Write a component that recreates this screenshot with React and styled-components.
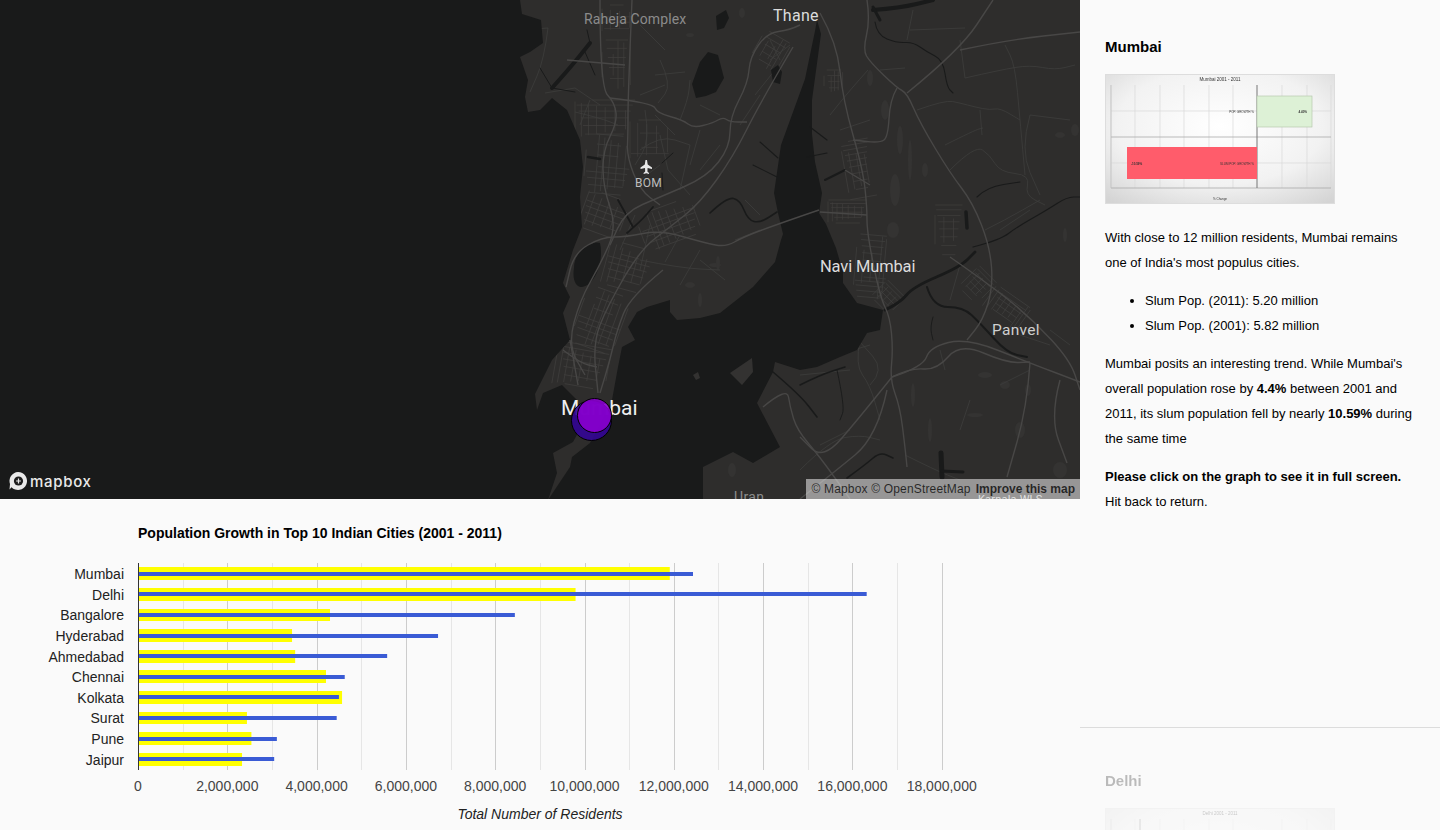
import React from 'react';
import styled, { createGlobalStyle } from 'styled-components';

const GlobalStyle = createGlobalStyle`
  html, body {
    margin: 0;
    height: 100%;
    overflow: hidden;
    background: #fafafa;
    font-family: 'Liberation Sans', Arial, sans-serif;
  }
  #root { height: 830px; }
`;

const WATER =
  'M-60,-60 L520,-60 520,0 522,14 541,20 543,43 530,52 520,57 528,80 525,97 528,112 540,110 552,98 567,110 580,140 583,167 580,197 582,227 573,250 563,283 570,297 563,313 570,340 552,360 535,394 537,410 543,393 562,385 577,400 585,420 573,442 553,453 557,473 548,500 570,467 572,457 590,443 612,400 618,367 622,347 635,340 628,327 637,312 647,307 670,300 670,312 677,320 700,318 720,313 753,287 775,262 781,240 783,234 778,213 774,193 781,145 805,79 815,31 817,20 821,34 812,100 812,134 815,162 822,193 819,213 826,224 836,248 843,272 843,283 857,303 883,310 880,330 867,333 857,350 840,357 817,367 800,370 775,362 773,372 757,403 780,447 753,463 733,452 703,467 703,560 -60,560 Z';

const LAKES = [
  'M692,84 L700,62 708,52 718,55 724,78 716,92 706,96 696,98 Z',
  'M716,16 L726,10 729,18 724,28 717,30 Z',
  'M574,268 C574,250 592,240 600,243 C604,260 596,285 582,287 C576,287 572,280 574,268 Z',
  'M771,70 L778,65 782,72 780,84 773,82 Z',
];

const LAND_PATCHES = [
  'M730,373 L752,358 753,372 742,385 Z',
  'M693,375 L698,372 700,378 696,380 Z',
];

const CREEKS = [
  { w: 4, d: 'M552,88 L570,68 590,43' },
  { w: 1, d: 'M590,43 L587,30 M585,52 L595,75 M552,88 L540,68 M552,88 L575,92' },
  { w: 1.8, d: 'M618,200 L633,227 M627,233 L640,222 653,207' },
  { w: 2.5, d: 'M588,157 L600,159' },
  { w: 1, d: 'M662,163 L673,153 M662,173 L663,190' },
  { w: 1.6, d: 'M710,213 L727,197 740,200 748,220 760,223 777,212' },
  { w: 1.1, d: 'M760,142 L778,158 M753,165 L777,177' },
  { w: 1.2, d: 'M810,127 L827,140 M807,157 L827,153' },
  { w: 2, d: 'M825,180 L845,170' },
  { w: 4, d: 'M873,10 L900,8 933,0' },
  { w: 3, d: 'M873,7 L880,20' },
  { w: 1.1, d: 'M875,22 L877,35 897,43 913,42 927,52 943,60 947,87 953,93' },
  { w: 2.8, d: 'M885,310 L900,303 913,287 960,267 975,252' },
  { w: 2, d: 'M927,287 L933,307 963,307 980,323 1007,353 1027,357' },
  { w: 0.9, d: 'M933,317 L930,327 933,340' },
  { w: 1.6, d: 'M773,372 L800,395 817,417 M800,385 L820,375 845,367' },
  { w: 0.9, d: 'M837,370 L845,407 840,420' },
  { w: 1.6, d: 'M847,478 L865,465 880,452 893,458' },
  { w: 1.1, d: 'M977,197 L987,187 1020,182' },
  { w: 3.5, d: 'M966,212 L967,228' },
  { w: 1.2, d: 'M973,247 L1000,240 1017,227 1047,210 1067,197 1080,197' },
  { w: 5, d: 'M941,453 L942,477' },
  { w: 3, d: 'M942,471 L963,472' },
];

const MINOR_ROADS = [
  'M520,30 L548,28 M548,28 L544,60 530,92 M545,93 L575,88 M575,88 L600,105 M575,112 L600,118 618,125',
  'M640,25 L665,50 M660,60 L672,85 658,103 M655,75 L685,72 M680,120 L688,100 690,80 M700,105 L720,115',
  'M640,150 L660,135 690,145 M660,135 L668,170 M690,145 L680,190 M720,145 L700,170 M640,180 L660,165',
  'M770,40 L780,60 M770,60 L790,45 M755,95 L775,70 M740,125 L760,95',
  'M760,230 L735,240 M745,200 L760,215 M640,260 L680,268 720,270 M700,260 L725,280',
  'M907,40 L913,10 M910,30 L965,28 M870,120 L840,130 M868,70 L850,90 830,115 M880,70 L905,68',
  'M917,110 L945,100 960,103 975,107 990,110 1000,108 1020,120 M980,110 L982,135 M945,145 L975,130 983,128',
  'M950,170 L975,145 990,155 1000,172 1030,175 1025,195 1045,205 M1025,175 L1020,120 1015,65 1005,45',
  'M960,40 L965,78 M965,78 L1000,70 1030,65 1055,70 1075,65 M1030,115 L1020,150 1040,195 M1030,115 L1070,120',
  'M1000,230 L1030,210 M985,230 L1005,220 1040,200 M950,300 L960,265',
  'M800,375 L850,370 M820,360 L870,345 M860,340 L855,365 870,385 880,420 M870,385 L885,370 860,342',
  'M800,470 L830,440 860,435 880,440 M850,430 L820,445 M940,350 L945,370 M1000,385 L1030,370',
  'M905,455 L935,470 960,480 M970,400 L960,430 M1050,330 L1070,345 M1020,335 L1050,345',
  'M645,110 L650,140 635,165 M655,115 L675,135 M640,95 L665,85 M590,100 L580,125 M700,130 L690,165 M668,170 L690,195',
  'M635,215 L620,250 M650,225 L640,270 M680,235 L665,262 M700,250 L680,285',
];

const MAJOR_ROADS = [
  'M600,0 L600,87 615,103 617,123 603,150 603,187 617,227 600,265 580,300 568,345 585,375',
  'M632,0 L628,97 628,133 627,157 640,190 660,205',
  'M610,98 L653,103 657,113 683,120 693,128 713,123 723,117 730,122 747,122',
  'M800,25 L790,30 767,33 750,57 748,83 730,117 730,147 707,177 660,197 625,212 610,245',
  'M793,47 L760,103 733,157 700,203 670,227 640,250 607,307 593,343 598,393',
  'M819,210 L781,223 743,237 726,247 705,243 660,230 626,237 602,237 574,253 566,287',
  'M663,270 L630,297 617,330 610,360 600,393',
  'M563,350 L580,363 597,367 M570,340 L578,385',
  'M820,13 L837,43 843,100 863,170 867,207 867,233 880,297 890,317 893,350 890,380 900,407 905,447 907,467',
  'M867,0 L870,20 863,50 870,62 897,88 907,93 920,123 950,173 973,203 990,247 993,287 983,320 967,340',
  'M907,93 L960,50 993,0 M960,50 L1007,40 1080,32',
  'M897,88 L890,100 888,137 880,143 853,140',
  'M892,377 L923,367 930,347 967,338 1030,363 1080,382',
  'M892,377 L910,368 937,370 960,343 1007,363 1030,362',
  'M950,257 L993,287 1033,320 1070,360 1080,390',
  'M1030,363 L1027,407 1007,477 M1060,380 L1050,417 1067,463',
  'M892,377 L860,417 823,460 800,437 M887,390 L877,437 833,473 800,499',
  'M763,407 L787,387 790,407 797,430 820,457 850,499',
  'M820,212 L867,215 M845,170 L870,185 M567,60 L625,65',
];

const CITY_GRIDS = [
  { x: 602, y: 5, w: 30, h: 30, s: 8, r: 0 },
  { x: 602, y: 40, w: 30, h: 50, s: 8, r: 0 },
  { x: 575, y: 100, w: 60, h: 40, s: 8, r: 0 },
  { x: 585, y: 135, w: 45, h: 60, s: 8, r: 5 },
  { x: 630, y: 120, w: 40, h: 40, s: 10, r: 0 },
  { x: 582, y: 195, w: 45, h: 40, s: 8, r: 20 },
  { x: 640, y: 205, w: 60, h: 40, s: 8, r: -20 },
  { x: 605, y: 245, w: 45, h: 45, s: 8, r: 15 },
  { x: 578, y: 290, w: 45, h: 60, s: 8, r: 20 },
  { x: 555, y: 345, w: 55, h: 45, s: 7, r: 10 },
  { x: 755, y: 35, w: 32, h: 35, s: 6, r: 30 },
  { x: 824, y: 70, w: 20, h: 22, s: 5, r: 0 },
  { x: 828, y: 200, w: 40, h: 24, s: 5, r: 0 },
  { x: 845, y: 140, w: 28, h: 60, s: 6, r: -10 },
  { x: 855, y: 235, w: 32, h: 65, s: 6, r: 5 },
  { x: 875, y: 285, w: 25, h: 25, s: 5, r: 45 },
  { x: 935, y: 205, w: 28, h: 50, s: 7, r: 0 },
  { x: 965, y: 270, w: 25, h: 30, s: 5, r: 45 },
  { x: 985, y: 295, w: 45, h: 28, s: 5, r: 35 },
];

const PARK_SPOTS = [
  [885, 110, 4, 10], [870, 78, 3, 8], [900, 140, 3, 14], [895, 190, 5, 16], [910, 160, 2, 20],
  [925, 170, 3, 7], [893, 230, 6, 8], [1060, 135, 5, 3], [1075, 130, 4, 6], [1065, 235, 2, 7],
  [985, 375, 7, 3], [975, 415, 8, 2], [1005, 385, 5, 4], [1020, 430, 5, 8], [1028, 390, 3, 6],
  [930, 430, 2, 12], [913, 395, 2, 12], [690, 285, 5, 3], [715, 265, 6, 2], [700, 300, 2, 7],
  [718, 263, 2, 7], [742, 13, 3, 5], [690, 35, 4, 2], [1060, 470, 7, 8], [732, 470, 4, 7],
];

const jitter = (n) => ((n * 9301 + 49297) % 233280) / 233280;

// irregular street blocks, so the grids don't read as a plain hatch
const gridPath = ({ x, y, w, h, s }) => {
  let d = '';
  let n = x + y;
  for (let i = 0; i <= w; i += s * (0.6 + jitter(n++) * 0.9)) {
    d += `M${(x + i).toFixed(1)},${(y + jitter(n++) * h * 0.3).toFixed(1)} V${(y + h - jitter(n++) * h * 0.3).toFixed(1)} `;
  }
  for (let j = 0; j <= h; j += s * (0.6 + jitter(n++) * 0.9)) {
    d += `M${(x + jitter(n++) * w * 0.3).toFixed(1)},${(y + j).toFixed(1)} H${(x + w - jitter(n++) * w * 0.3).toFixed(1)} `;
  }
  return d;
};

// rounds the corners of the hand-traced polylines
const smooth = (d) =>
  d
    .split('M')
    .filter((part) => part.trim())
    .map((part) => {
      const pts = part
        .replace(/[LZ]/g, ' ')
        .trim()
        .split(/\s+/)
        .map((p) => p.split(',').map(Number));
      if (pts.length < 3) return `M${pts.map((p) => p.join(',')).join(' L')}`;
      let out = `M${pts[0].join(',')}`;
      for (let i = 1; i < pts.length - 1; i++) {
        const mx = (pts[i][0] + pts[i + 1][0]) / 2;
        const my = (pts[i][1] + pts[i + 1][1]) / 2;
        out += ` Q${pts[i].join(',')} ${mx},${my}`;
      }
      return `${out} L${pts[pts.length - 1].join(',')}`;
    })
    .join(' ');

const CITIES = [
  { name: 'Mumbai', city: 11.91, slum: 12.43, top: 17, thick: 13, inner: 22, base: 29 },
  { name: 'Delhi', city: 9.8, slum: 16.32, top: 38, thick: 13, inner: 42, base: 50 },
  { name: 'Bangalore', city: 4.3, slum: 8.44, top: 59, thick: 12, inner: 63, base: 70 },
  { name: 'Hyderabad', city: 3.45, slum: 6.72, top: 79, thick: 13, inner: 84, base: 91 },
  { name: 'Ahmedabad', city: 3.52, slum: 5.58, top: 100, thick: 13, inner: 104, base: 112 },
  { name: 'Chennai', city: 4.21, slum: 4.63, top: 120, thick: 13, inner: 125, base: 132 },
  { name: 'Kolkata', city: 4.57, slum: 4.5, top: 141, thick: 13, inner: 145, base: 153 },
  { name: 'Surat', city: 2.44, slum: 4.45, top: 162, thick: 12, inner: 166, base: 173 },
  { name: 'Pune', city: 2.54, slum: 3.11, top: 182, thick: 13, inner: 187, base: 194 },
  { name: 'Jaipur', city: 2.33, slum: 3.05, top: 203, thick: 13, inner: 207, base: 215 },
];

const AXIS_X = 138;
const PER_MILLION = 44.65;
const PLOT_TOP = 13;
const PLOT_BOTTOM = 220;

const toX = (m) => AXIS_X + m * PER_MILLION;

const BarChart = () => {
  const ticks = Array.from({ length: 19 }, (_, i) => i);
  return (
    <ChartSvg width="1080" height="280">
      {ticks.slice(1).map((t) => (
        <GridLine
          key={t}
          $major={t % 2 === 0}
          x1={Math.round(toX(t)) + 0.5}
          x2={Math.round(toX(t)) + 0.5}
          y1={PLOT_TOP}
          y2={PLOT_BOTTOM}
        />
      ))}
      {CITIES.map((c) => (
        <g key={c.name}>
          <rect x={AXIS_X} y={c.top} width={c.city * PER_MILLION} height={c.thick} fill="#ffff00" />
          <rect x={AXIS_X} y={c.inner} width={c.slum * PER_MILLION} height={4} fill="#3a5bd5" />
          <CategoryLabel x={124} y={c.base}>
            {c.name}
          </CategoryLabel>
        </g>
      ))}
      <AxisLine x1={AXIS_X + 0.5} x2={AXIS_X + 0.5} y1={PLOT_TOP} y2={PLOT_BOTTOM} />
      {ticks
        .filter((t) => t % 2 === 0)
        .map((t) => (
          <TickLabel key={t} x={toX(t)} y={241}>
            {(t * 1000000).toLocaleString('en-US')}
          </TickLabel>
        ))}
      <AxisTitle x={540} y={269}>
        Total Number of Residents
      </AxisTitle>
    </ChartSvg>
  );
};

const Thumb = ({ id, title, zero, dimmed }) => (
  <ThumbBox>
    <svg width="230" height="130">
      <defs>
        <radialGradient id={`sheen-${id}`} cx="50%" cy="40%" r="75%">
          <stop offset="0%" stopColor="#ffffff" />
          <stop offset="60%" stopColor="#f2f2f2" />
          <stop offset="100%" stopColor="#d4d4d4" />
        </radialGradient>
      </defs>
      <rect width="230" height="130" fill={`url(#sheen-${id})`} />
      <ThumbTitle x="115" y="7">
        {title}
      </ThumbTitle>
      {[6, 30, 55, 79, 104, 128, 177, 202, 226].map((x) => (
        <line key={x} x1={x} x2={x} y1="11" y2="114" stroke="#d8d8d8" strokeWidth="0.7" />
      ))}
      {[37, 89].map((y) => (
        <line key={y} x1="6" x2="226" y1={y} y2={y} stroke="#d8d8d8" strokeWidth="0.7" />
      ))}
      <line x1="6" x2="226" y1="63" y2="63" stroke="#aaa" strokeWidth="0.8" />
      <line x1="6" x2="226" y1="114" y2="114" stroke="#aaa" strokeWidth="0.8" />
      <line x1="6" x2="6" y1="11" y2="114" stroke="#bbb" strokeWidth="0.7" />
      <line x1={zero} x2={zero} y1="11" y2="114" stroke="#777" strokeWidth="1" />
      {!dimmed && (
        <>
          <rect x="152" y="22" width="55" height="31" fill="#ddf1d6" stroke="#b7c8b0" strokeWidth="0.7" />
          <rect x="22" y="73" width="130" height="32" fill="#ff5c6b" />
          <ThumbMini x="149" y="39" textAnchor="end">POP. GROWTH %</ThumbMini>
          <ThumbMini x="202" y="39" textAnchor="end" fontWeight="bold">4.40%</ThumbMini>
          <ThumbMini x="149" y="91" textAnchor="end">SLUM POP. GROWTH %</ThumbMini>
          <ThumbMini x="26" y="91" fontWeight="bold">-10.59%</ThumbMini>
          <ThumbMini x="115" y="126" textAnchor="middle">% Change</ThumbMini>
        </>
      )}
    </svg>
  </ThumbBox>
);

const App = () => (
  <>
    <GlobalStyle />
    <Page>
      <LeftColumn>
        <MapPane>
          <MapCanvas viewBox="0 0 1080 499" width="1080" height="499">
            <rect width="1080" height="499" fill="#2e2d2c" />
            {PARK_SPOTS.map(([x, y, rx, ry]) => (
              <ellipse key={`${x}-${y}`} cx={x} cy={y} rx={rx} ry={ry} fill="#343332" />
            ))}
            {CITY_GRIDS.map((g) => (
              <path
                key={`${g.x}-${g.y}`}
                d={gridPath(g)}
                transform={`rotate(${g.r} ${g.x + g.w / 2} ${g.y + g.h / 2})`}
                fill="none"
                stroke="#403f3e"
                strokeWidth="0.7"
              />
            ))}
            {MINOR_ROADS.map((d) => (
              <path key={d} d={smooth(d)} fill="none" stroke="#3e3d3c" strokeWidth="0.8" />
            ))}
            <path d={WATER} fill="#191a1a" />
            {LAKES.map((d) => (
              <path key={d} d={d} fill="#191a1a" />
            ))}
            {LAND_PATCHES.map((d) => (
              <path key={d} d={d} fill="#333231" />
            ))}
            {CREEKS.map((c) => (
              <path key={c.d} d={smooth(c.d)} fill="none" stroke="#191a1a" strokeWidth={c.w} strokeLinecap="round" />
            ))}
            {MAJOR_ROADS.map((d) => (
              <path key={d} d={smooth(d)} fill="none" stroke="#484746" strokeWidth="1.4" />
            ))}
            <path
              d="M645.5,160 L647,160 647.7,164.5 652,167.5 652,169 647.6,168 647.4,171.5 649,173 649,174 646.3,173.2 643.6,174 643.6,173 645.2,171.5 645,168 640.5,169 640.5,167.5 644.8,164.5 Z"
              fill="#e8e8e8"
            />
          </MapCanvas>
          <PlaceLabel $x={584} $y={11} $size={14} $track={0.1} $color="#8b8b8b">Raheja Complex</PlaceLabel>
          <PlaceLabel $x={773} $y={6} $size={16} $track={0.3} $color="#dcdcdc">Thane</PlaceLabel>
          <PlaceLabel $x={635} $y={176} $size={12} $track={0.2} $color="#bdbdbd">BOM</PlaceLabel>
          <PlaceLabel $x={820} $y={257} $size={16.5} $track={-0.15} $color="#dcdcdc">Navi Mumbai</PlaceLabel>
          <PlaceLabel $x={992} $y={321} $size={15.5} $track={0.3} $color="#cfcfcf">Panvel</PlaceLabel>
          <PlaceLabel $x={561} $y={396} $size={21} $track={0} $color="#efefef">Mumbai</PlaceLabel>
          <PlaceLabel $x={734} $y={489} $size={14} $track={0.4} $color="#8b8b8b">Uran</PlaceLabel>
          <PlaceLabel $x={978} $y={493} $size={11} $track={0.2} $color="#c4c4c4">Karnala WLS</PlaceLabel>
          <MarkerBack />
          <MarkerFront />
          <MapboxLogo>
            <svg width="20" height="20" viewBox="0 0 20 20">
              <path d="M10,1 a9,9 0 1 1 -6.5,15.2 L1.5,18.5 L2,13 A9,9 0 0 1 10,1 Z" fill="#e9e9e9" />
              <circle cx="10.5" cy="10" r="4.6" fill="#1d1d1d" />
              <path d="M10.5,7.6 V12.4 M8.1,10 H12.9" stroke="#e9e9e9" strokeWidth="1.2" />
            </svg>
            <LogoWord>mapbox</LogoWord>
          </MapboxLogo>
          <Attribution>
            <Credit>© Mapbox © OpenStreetMap</Credit> <ImproveLink>Improve this map</ImproveLink>
          </Attribution>
        </MapPane>
        <ChartPane>
          <ChartTitle>Population Growth in Top 10 Indian Cities (2001 - 2011)</ChartTitle>
          <BarChart />
        </ChartPane>
      </LeftColumn>
      <SidePanel>
        <CitySection>
          <CityName>Mumbai</CityName>
          <Thumb id="mumbai" title="Mumbai 2001 - 2011" zero={152} />
          <Copy>With close to 12 million residents, Mumbai remains one of India's most populus cities.</Copy>
          <Stats>
            <li>Slum Pop. (2011): 5.20 million</li>
            <li>Slum Pop. (2001): 5.82 million</li>
          </Stats>
          <Copy>
            Mumbai posits an interesting trend. While Mumbai's overall population rose by <b>4.4%</b> between 2001 and
            2011, its slum population fell by nearly <b>10.59%</b> during the same time
          </Copy>
          <Copy>
            <b>Please click on the graph to see it in full screen.</b> Hit back to return.
          </Copy>
        </CitySection>
        <FadedSection>
          <CityName>Delhi</CityName>
          <Thumb id="delhi" title="Delhi 2001 - 2011" zero={35} dimmed />
        </FadedSection>
      </SidePanel>
    </Page>
  </>
);

const Page = styled.div`
  width: 1440px;
  height: 830px;
  display: flex;
  overflow: hidden;
  background: #fafafa;
`;
const LeftColumn = styled.div`
  width: 1080px;
  display: flex;
  flex-direction: column;
`;
const MapPane = styled.div`
  position: relative;
  height: 499px;
  overflow: hidden;
  background: #191a1a;
`;
const MapCanvas = styled.svg`
  display: block;
`;
const PlaceLabel = styled.div`
  position: absolute;
  left: ${(p) => p.$x}px;
  top: ${(p) => p.$y}px;
  font-family: Roboto, sans-serif;
  font-size: ${(p) => p.$size}px;
  line-height: 1.2;
  letter-spacing: ${(p) => p.$track}px;
  white-space: nowrap;
  color: ${(p) => p.$color};
`;
const MarkerBack = styled.div`
  position: absolute;
  left: 571px;
  top: 400px;
  width: 41px;
  height: 41px;
  box-sizing: border-box;
  border-radius: 50%;
  border: 1.5px solid #000;
  background: rgba(52, 5, 150, 0.9);
`;
const MarkerFront = styled.div`
  position: absolute;
  left: 577px;
  top: 398px;
  width: 35px;
  height: 35px;
  box-sizing: border-box;
  border-radius: 50%;
  border: 1.5px solid #000;
  background: rgba(137, 0, 207, 0.9);
`;
const MapboxLogo = styled.div`
  position: absolute;
  left: 8px;
  bottom: 8px;
  display: flex;
  align-items: center;
  gap: 2px;
`;
const LogoWord = styled.span`
  font-family: Inter, sans-serif;
  font-size: 15px;
  font-weight: 500;
  letter-spacing: 0.7px;
  color: #e9e9e9;
`;
const Attribution = styled.div`
  position: absolute;
  right: 0;
  bottom: 0;
  height: 20px;
  padding: 0 5px;
  display: flex;
  align-items: center;
  gap: 5px;
  background: rgba(255, 255, 255, 0.5);
  font-size: 12px;
  color: rgba(0, 0, 0, 0.75);
  white-space: nowrap;
`;
const Credit = styled.span`
  letter-spacing: 0.17px;
`;
const ImproveLink = styled.span`
  font-weight: 700;
`;
const ChartPane = styled.div`
  flex: 1;
  background: #fafafa;
`;
const ChartTitle = styled.div`
  padding: 26px 0 0 138px;
  height: 25px;
  font-size: 14px;
  line-height: 16px;
  font-weight: 700;
  color: #000;
`;
const ChartSvg = styled.svg`
  display: block;
`;
const GridLine = styled.line`
  stroke: ${(p) => (p.$major ? '#cccccc' : '#e6e6e6')};
  stroke-width: 1;
`;
const AxisLine = styled.line`
  stroke: #333;
  stroke-width: 1;
`;
const CategoryLabel = styled.text`
  font-size: 14px;
  text-anchor: end;
  fill: #222;
`;
const TickLabel = styled.text`
  font-size: 14px;
  text-anchor: middle;
  fill: #444;
`;
const AxisTitle = styled.text`
  font-size: 14px;
  font-style: italic;
  text-anchor: middle;
  fill: #222;
`;
const SidePanel = styled.div`
  width: 360px;
  height: 830px;
  overflow: hidden;
  background: #fafafa;
`;
const CitySection = styled.section`
  box-sizing: border-box;
  height: 728px;
  padding: 39px 25px 0;
  border-bottom: 1px solid #dcdcdc;
`;
const FadedSection = styled(CitySection)`
  height: auto;
  padding-top: 45px;
  border-bottom: none;
  opacity: 0.25;
`;
const CityName = styled.h3`
  margin: 0 0 19px;
  font-size: 15px;
  line-height: 16px;
  font-weight: 700;
  color: #000;
`;
const ThumbBox = styled.div`
  width: 230px;
  height: 130px;
  box-sizing: border-box;
  outline: 1px solid #dddddd;
  outline-offset: -1px;
  margin-bottom: 21px;
  filter: blur(0.4px);
  svg {
    display: block;
  }
`;
const ThumbTitle = styled.text`
  font-size: 4.5px;
  text-anchor: middle;
  fill: #333;
`;
const ThumbMini = styled.text`
  font-size: 3px;
  fill: #333;
`;
const Copy = styled.p`
  margin: 0 0 13px;
  font-size: 13px;
  line-height: 25px;
  color: #000;
`;
const Stats = styled.ul`
  margin: 0 0 13px;
  padding-left: 40px;
  font-size: 13px;
  line-height: 25px;
  color: #000;
`;

export default App;
